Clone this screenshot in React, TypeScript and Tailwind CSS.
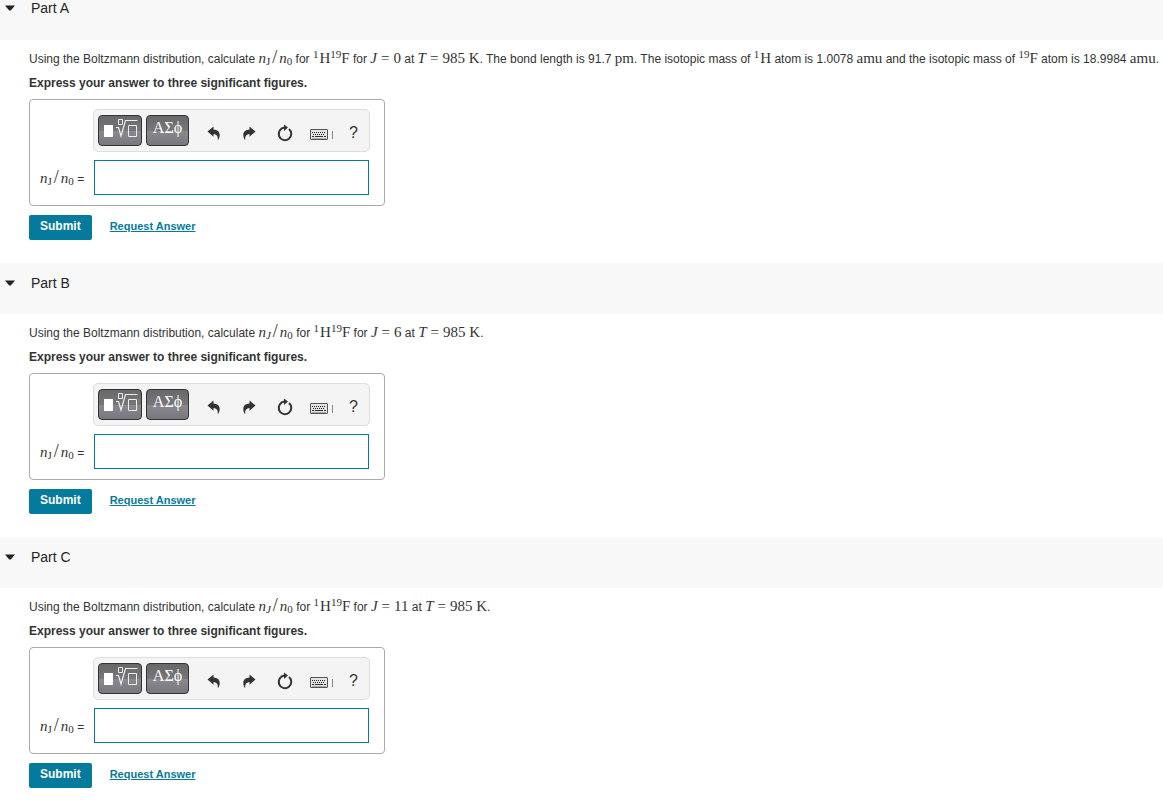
import type { ReactNode } from "react";

function M({ children }: { children: ReactNode }) {
  return <span className="font-['Liberation_Serif',serif] text-[15px] leading-none text-[#333]">{children}</span>;
}

function Sup({ children }: { children: ReactNode }) {
  return <sup className="top-0 align-[5px] text-[11px] leading-none">{children}</sup>;
}

function Ratio({ upright = false }: { upright?: boolean }) {
  return (
    <M>
      <i>n</i>
      <sub className={upright ? "bottom-0 align-[-2px] text-[11px] leading-none" : "bottom-0 align-[-2px] text-[11px] italic leading-none"}>J</sub>
      <span className="mx-0.5 text-[18px]">/</span>
      <i>n</i>
      <sub className="bottom-0 align-[-2px] text-[11px] leading-none">0</sub>
    </M>
  );
}

function Proton() {
  return (
    <M>
      <Sup>1</Sup>
      <span className="ml-px">H</span>
    </M>
  );
}

function Fluorine() {
  return (
    <M>
      <Sup>19</Sup>F
    </M>
  );
}

function Equation({ name, value }: { name: string; value: string }) {
  return (
    <M>
      <i>{name}</i>
      <span className="mx-1">=</span>
      {value}
    </M>
  );
}

function TemplatesIcon() {
  return (
    <svg width="42" height="29" viewBox="0 0 42 29" fill="none" aria-hidden="true">
      <path d="M5 9h9v12H5z" fill="#fff" />
      <path d="M19.5 3.5h4v5h-4zM29.5 9.500h8v11h-8z" stroke="#eee" />
      <path d="M17 11.500h2.500l2.500 8.500 4.500-15.500h12" stroke="#eee" strokeWidth="1.200" />
    </svg>
  );
}

function UndoIcon() {
  return (
    <svg width="14" height="14" viewBox="0 0 14 14" fill="#333" aria-hidden="true">
      <path d="M0.500 5.500 6.500 0.500v3c3.800.1 6.200 2.200 6.200 5.300 0 2-.5 3.400-1.400 5h-.6c.2-1.500.1-2.800-.5-3.800C9.500 8.800 8.500 8 6.500 7.900v2.800z" />
    </svg>
  );
}

function RedoIcon() {
  return (
    <svg width="14" height="14" viewBox="0 0 14 14" fill="#333" aria-hidden="true">
      <path d="M13.500 5.500 7.500 0.500v3C3.700 3.600 1.300 5.700 1.300 8.800c0 2 .5 3.400 1.400 5h.6c-.2-1.500-.1-2.800.5-3.800C4.500 8.800 5.500 8 7.500 7.900v2.800z" />
    </svg>
  );
}

function ResetIcon() {
  return (
    <svg width="18" height="18" viewBox="0 0 18 18" fill="none" aria-hidden="true">
      <path d="M13 5A6.300 6.300 0 1 1 8.500 3.600" stroke="#333" strokeWidth="2" />
      <path d="M8 0.500 12 3.600 8 7z" fill="#333" />
    </svg>
  );
}

function KeyboardIcon() {
  return (
    <svg width="18" height="11" viewBox="0 0 18 11" fill="none" aria-hidden="true">
      <rect x="0.500" y="0.500" width="17" height="10" rx="0.500" fill="#e4e4e4" stroke="#555" />
      <path d="M2 9.500h14" stroke="#aaa" />
      <path d="M2 3.500h14M3 5.500h12" stroke="#222" strokeDasharray="1 1" />
      <path d="M2 7.500h2M5 7.500h8M14 7.500h2" stroke="#333" />
    </svg>
  );
}

const darkButton =
  "flex h-[31px] items-center justify-center rounded border border-[#333] bg-[linear-gradient(#68686b_0%,#77777a_50%,#89898f_51%,#77777d_100%)]";

function AnswerBox({ id }: { id: string }) {
  return (
    <div className="grid w-fit grid-cols-[53px_277px] items-center gap-y-2 rounded border border-[#aaa] pt-[9px] pr-[14px] pb-[10px] pl-[10px]">
      <div className="col-start-2 flex h-[43px] items-center rounded-[5px] border border-[#ddd] bg-[#f4f4f4] pl-1" role="toolbar">
        <button type="button" aria-label="Templates" className={`${darkButton} w-11`}>
          <TemplatesIcon />
        </button>
        <button
          type="button"
          className={`${darkButton} ml-1 w-[43px] pb-1.5 font-['Liberation_Serif',serif] text-base text-white`}
        >
          ΑΣϕ
        </button>
        <div className="flex items-center pt-1">
          <button type="button" aria-label="Undo" className="ml-[18px]">
            <UndoIcon />
          </button>
          <button type="button" aria-label="Redo" className="ml-[21px]">
            <RedoIcon />
          </button>
          <button type="button" aria-label="Reset" className="ml-5">
            <ResetIcon />
          </button>
          <button type="button" aria-label="Keyboard shortcuts" className="ml-4 flex items-center gap-1 pt-1">
            <KeyboardIcon />
            <span className="h-2 w-px bg-[#888]" />
          </button>
          <button type="button" aria-label="Help" className="ml-4 text-base leading-4 text-[#333]">
            ?
          </button>
        </div>
      </div>
      <label htmlFor={id} className="whitespace-nowrap text-[12px] leading-4">
        <Ratio upright /> =
      </label>
      <input id={id} type="text" className="ml-px h-[35px] w-[275px] border border-[#047a9c] bg-white px-2 text-sm outline-none" />
    </div>
  );
}

function Part({ name, first = false, children }: { name: string; first?: boolean; children: ReactNode }) {
  return (
    <section>
      <header className={first ? "h-10 bg-[#f8f8f8]" : "h-[51px] bg-[#f8f8f8] pt-3"}>
        <h2>
          <button type="button" className="flex items-center gap-4 pl-[5px] text-[14px] leading-4 text-[#252525]">
            <svg width="10" height="6" viewBox="0 0 10 6" fill="#222" aria-hidden="true">
              <path d="M0 0.500h10L6 5.200Q5 6 4 5.200z" />
            </svg>
            {name}
          </button>
        </h2>
      </header>
      <div className="pt-2 pl-[29px]">
        <p className="min-h-[18px] leading-[18px]">{children}</p>
        <p className="mt-1.5 mb-[7px] font-bold leading-[18px]">Express your answer to three significant figures.</p>
        <AnswerBox id={`answer-${name.slice(-1)}`} />
        <div className="mt-[9px] flex items-start gap-[18px]">
          <button type="button" className="h-[25px] rounded-[2px] bg-[#047a9c] px-[11px] pb-1 text-[12px] leading-4 font-bold text-white">
            Submit
          </button>
          <a href="#answer" className="pt-[3px] text-[11px] leading-4 font-bold text-[#047a9c] underline">
            Request Answer
          </a>
        </div>
      </div>
    </section>
  );
}

export default function App() {
  return (
    <main className="flex flex-col gap-[23px] bg-white font-['Liberation_Sans',sans-serif] text-[12px] text-[#333]">
      <Part name="Part A" first>
        Using the Boltzmann distribution, calculate <Ratio upright /> for <Proton />
        <Fluorine /> for <Equation name="J" value="0" /> at <Equation name="T" value="985 K" />. The bond length is 91.7{" "}
        <M>pm</M>. The isotopic mass of <Proton /> atom is 1.0078 <M>amu</M> and the isotopic mass of <Fluorine /> atom is
        18.9984 <M>amu</M>.
      </Part>
      <Part name="Part B">
        Using the Boltzmann distribution, calculate <Ratio /> for <Proton />
        <Fluorine /> for <Equation name="J" value="6" /> at <Equation name="T" value="985 K" />.
      </Part>
      <Part name="Part C">
        Using the Boltzmann distribution, calculate <Ratio /> for <Proton />
        <Fluorine /> for <Equation name="J" value="11" /> at <Equation name="T" value="985 K" />.
      </Part>
    </main>
  );
}
